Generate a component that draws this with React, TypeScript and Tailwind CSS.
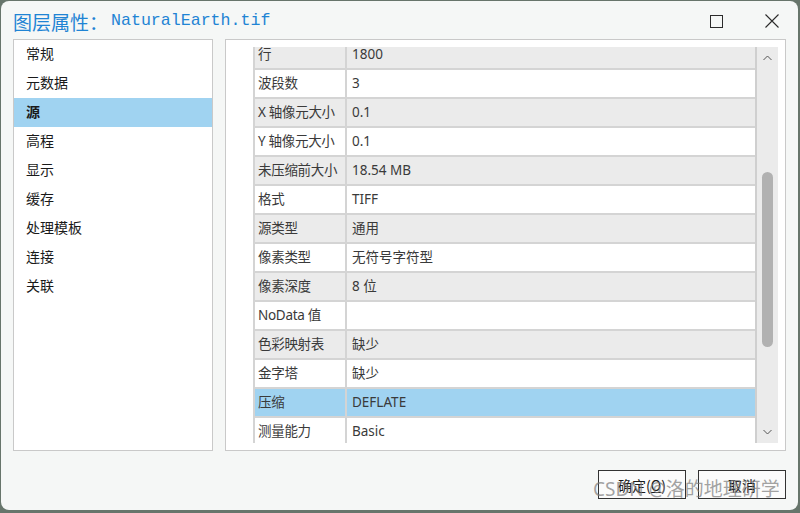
import React from "react";

const rows: { k: string; v: string; bg: "g" | "w" | "s" }[] = [
  { k: "行", v: "1800", bg: "g" },
  { k: "波段数", v: "3", bg: "w" },
  { k: "X 轴像元大小", v: "0.1", bg: "g" },
  { k: "Y 轴像元大小", v: "0.1", bg: "w" },
  { k: "未压缩前大小", v: "18.54 MB", bg: "g" },
  { k: "格式", v: "TIFF", bg: "w" },
  { k: "源类型", v: "通用", bg: "g" },
  { k: "像素类型", v: "无符号字符型", bg: "w" },
  { k: "像素深度", v: "8 位", bg: "g" },
  { k: "NoData 值", v: "", bg: "w" },
  { k: "色彩映射表", v: "缺少", bg: "g" },
  { k: "金字塔", v: "缺少", bg: "w" },
  { k: "压缩", v: "DEFLATE", bg: "s" },
  { k: "测量能力", v: "Basic", bg: "w" },
];

const nav = ["常规", "元数据", "源", "高程", "显示", "缓存", "处理模板", "连接", "关联"];

export default function App() {
  return (
    <div className="relative w-[800px] h-[513px] bg-[#67756b] pt-[1px] pl-[1px] overflow-hidden">
      <div className="w-[797px] h-[509px] rounded-[8px] bg-[#f5f7f6] flex flex-col">
        {/* title bar */}
        <div className="h-[38px] flex items-center pl-[12px] pt-[2px] shrink-0">
          <span
            className="text-[19px] leading-none text-[#1f84d4]"
            style={{ fontFamily: "'Noto Sans CJK SC', sans-serif" }}
          >
            图层属性：
          </span>
          <span
            className="text-[16.6px] leading-none text-[#1f84d4] ml-[3px]"
            style={{ fontFamily: "'Liberation Mono', monospace" }}
          >
            NaturalEarth.tif
          </span>
          <div className="ml-auto flex items-center">
            <svg width="13" height="13" viewBox="0 0 13 13">
              <rect x="0.5" y="0.5" width="12" height="12" fill="none" stroke="#2b2b2b" strokeWidth="1" />
            </svg>
            <svg width="14" height="14" viewBox="0 0 14 14" className="ml-[42px] mr-[19px]">
              <path d="M0.5 0.5 L13.5 13.5 M13.5 0.5 L0.5 13.5" stroke="#2b2b2b" strokeWidth="1.1" />
            </svg>
          </div>
        </div>

        {/* content */}
        <div className="flex pl-[12px] pr-[12px] h-[412px] shrink-0 gap-[12px]">
          {/* left nav */}
          <div
            className="w-[200px] h-full border border-[#c9c9c9] bg-white flex flex-col"
            style={{ fontFamily: "'Noto Sans CJK SC', sans-serif" }}
          >
            {nav.map((n) => (
              <div
                key={n}
                className={`h-[29px] flex items-center pl-[12px] pb-[3px] text-[14px] leading-none text-[#1a1a1a] ${
                  n === "源" ? "bg-[#a0d3f1] font-bold" : ""
                }`}
              >
                {n}
              </div>
            ))}
          </div>

          {/* right panel */}
          <div className="flex-1 h-full border border-[#c9c9c9] bg-white pt-[7px] pb-[7px] pl-[27px] pr-[7px]">
            <div className="h-full flex">
              <div
                className="flex-1 overflow-hidden"
                style={{ fontFamily: "'Noto Sans', 'Noto Sans CJK SC', sans-serif" }}
              >
                <div className="mt-[-6px]">
                  {rows.map((r) => (
                    <div
                      key={r.k}
                      className={`h-[29px] grid grid-cols-[94px_1fr] border-b-2 border-[#d4d4d4] text-[13.5px] leading-none text-[#3a3a3a] ${
                        r.bg === "g" ? "bg-[#ebebeb]" : r.bg === "s" ? "bg-[#a0d3f1]" : "bg-white"
                      }`}
                    >
                      <div className="border-l-2 border-r-2 border-[#d4d4d4] flex items-center pl-[3px] whitespace-nowrap tracking-[-0.3px]">
                        {r.k}
                      </div>
                      <div className="flex items-center pl-[5px] whitespace-nowrap">{r.v}</div>
                    </div>
                  ))}
                </div>
              </div>
              {/* scrollbar */}
              <div className="w-[23px] h-full border-l-2 border-[#cfcfcf] bg-[#ebebeb] flex flex-col items-center">
                <div className="h-[22px] flex items-center justify-center">
                  <svg width="9" height="6" viewBox="0 0 9 6">
                    <path d="M0.5 5 L4.5 1 L8.5 5" fill="none" stroke="#555" strokeWidth="1" />
                  </svg>
                </div>
                <div className="h-[103px]" />
                <div className="w-[11px] h-[175px] rounded-full bg-[#b1b1b1]" />
                <div className="flex-1" />
                <div className="h-[22px] flex items-center justify-center">
                  <svg width="9" height="6" viewBox="0 0 9 6">
                    <path d="M0.5 1 L4.5 5 L8.5 1" fill="none" stroke="#555" strokeWidth="1" />
                  </svg>
                </div>
              </div>
            </div>
          </div>
        </div>

        {/* footer */}
        <div
          className="flex justify-end gap-[12px] pr-[12px] pt-[19px]"
          style={{ fontFamily: "'Noto Sans CJK SC', sans-serif" }}
        >
          <div className="w-[88px] h-[29px] border border-[#333] bg-[#fbfbfb] flex items-center justify-center text-[14px] leading-none text-[#1a1a1a]">
            确定(<span className="underline">O</span>)
          </div>
          <div className="w-[88px] h-[29px] border border-[#333] bg-[#fbfbfb] flex items-center justify-center text-[14px] leading-none text-[#1a1a1a]">
            取消
          </div>
        </div>
      </div>

      {/* watermark */}
      <div
        className="absolute left-[593px] top-[480px] text-[19px] leading-none text-[#7a7a7a]/70 whitespace-nowrap"
        style={{ fontFamily: "'Noto Sans', 'Noto Sans CJK SC', sans-serif" }}
      >
        CSDN @洛的地理研学
      </div>
    </div>
  );
}
